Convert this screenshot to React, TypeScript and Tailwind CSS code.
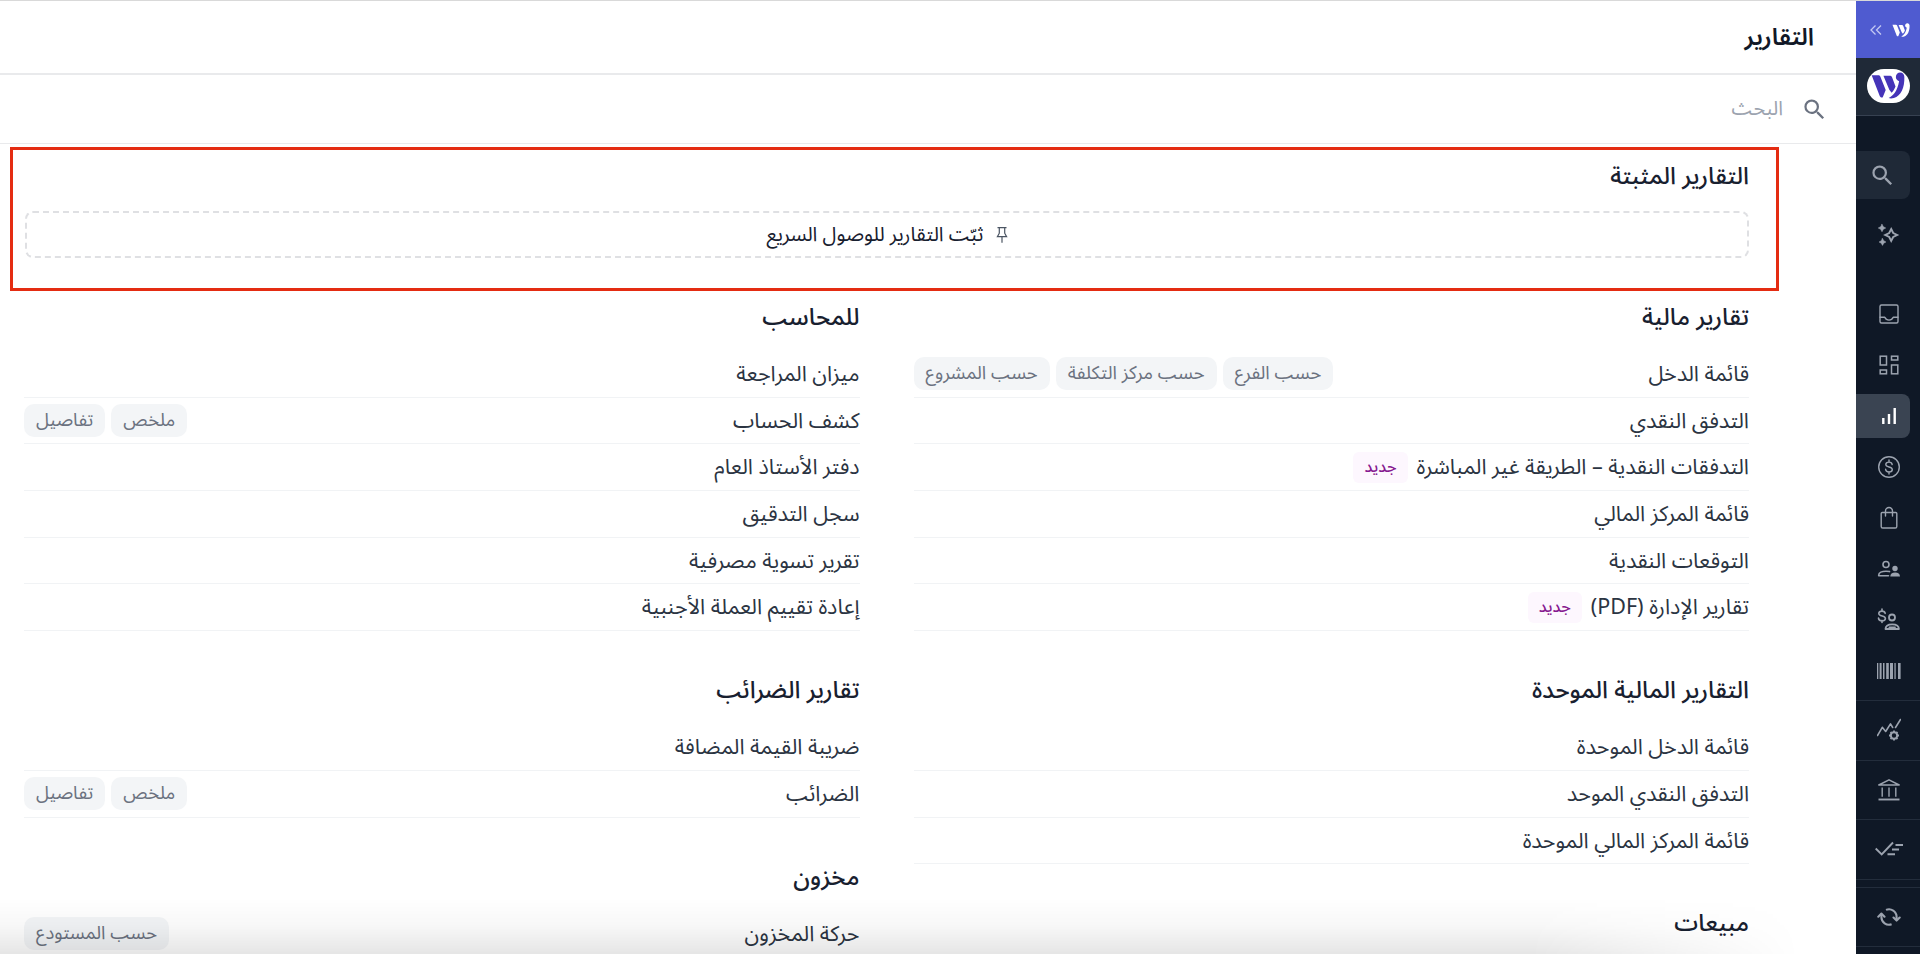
import { ReactNode } from 'react';
import { clsx } from 'clsx';
import { MdSearch } from 'react-icons/md';

interface Report {
  name: string;
  isNew?: boolean;
  tags?: string[];
}

interface Section {
  title: string;
  reports: Report[];
}

const rightColumn: Section[] = [
  {
    title: 'تقارير مالية',
    reports: [
      { name: 'قائمة الدخل', tags: ['حسب الفرع', 'حسب مركز التكلفة', 'حسب المشروع'] },
      { name: 'التدفق النقدي' },
      { name: 'التدفقات النقدية – الطريقة غير المباشرة', isNew: true },
      { name: 'قائمة المركز المالي' },
      { name: 'التوقعات النقدية' },
      { name: 'تقارير الإدارة (PDF)', isNew: true },
    ],
  },
  {
    title: 'التقارير المالية الموحدة',
    reports: [
      { name: 'قائمة الدخل الموحدة' },
      { name: 'التدفق النقدي الموحد' },
      { name: 'قائمة المركز المالي الموحدة' },
    ],
  },
  { title: 'مبيعات', reports: [] },
];

const leftColumn: Section[] = [
  {
    title: 'للمحاسب',
    reports: [
      { name: 'ميزان المراجعة' },
      { name: 'كشف الحساب', tags: ['ملخص', 'تفاصيل'] },
      { name: 'دفتر الأستاذ العام' },
      { name: 'سجل التدقيق' },
      { name: 'تقرير تسوية مصرفية' },
      { name: 'إعادة تقييم العملة الأجنبية' },
    ],
  },
  {
    title: 'تقارير الضرائب',
    reports: [
      { name: 'ضريبة القيمة المضافة' },
      { name: 'الضرائب', tags: ['ملخص', 'تفاصيل'] },
    ],
  },
  {
    title: 'مخزون',
    reports: [{ name: 'حركة المخزون', tags: ['حسب المستودع'] }],
  },
];

const Logo = ({ className }: { className?: string }) => (
  <svg viewBox="0 0 104 82" className={className} fill="currentColor">
    <path d="M2 10h20c4 0 6 2 7 5l16 40-9 22c-3 2-7 0-9-3z" />
    <path d="M38 11h19c4 0 7 2 8 6l10 27c-3 8-7 14-12 19l-7-9z" />
    <path d="M89 1c8 0 13 6 13 14 1 32-10 58-32 64-6 2-12 2-16 0 14-6 27-22 32-51-6-2-10-7-10-13 0-8 6-14 13-14z" />
  </svg>
);

// Iconos de línea de la barra lateral
const Icon = ({ children }: { children: ReactNode }) => (
  <svg
    viewBox="0 0 24 24"
    className="size-6"
    fill="none"
    stroke="currentColor"
    strokeWidth="1.4"
    strokeLinecap="round"
    strokeLinejoin="round"
  >
    {children}
  </svg>
);

const SparkleIcon = () => (
  <Icon>
    <path d="M14.200 6l2 4 4 2-4 2-2 4-2-4-4-2 4-2z" strokeWidth="1.900" strokeLinejoin="miter" />
    <path
      d="M5 1.300l1.300 2.400L8.700 5 6.300 6.300 5 8.700 3.700 6.300 1.300 5l2.400-1.300zM5.500 15.500l1.200 2.200L8.900 19l-2.200 1.200-1.200 2.200-1.200-2.200L2.100 19l2.200-1.300z"
      fill="currentColor"
      stroke="currentColor"
      strokeWidth=".6"
    />
  </Icon>
);

const InboxIcon = () => (
  <Icon>
    <rect x="3" y="3" width="18" height="18" rx="1.500" />
    <path d="M3 15.200h4.800c.8 1.900 2.400 2.900 4.200 2.900s3.400-1 4.200-2.900H21" />
  </Icon>
);

const DashboardIcon = () => (
  <Icon>
    <g strokeLinejoin="miter" strokeWidth="1.500">
      <rect x="3.200" y="3.200" width="6.300" height="8.800" />
      <rect x="14.500" y="3.200" width="6.300" height="3.800" />
      <rect x="14.500" y="12" width="6.300" height="8.800" />
      <rect x="3.200" y="17" width="6.300" height="3.800" />
    </g>
  </Icon>
);

const BarsIcon = () => (
  <Icon>
    <path d="M6.300 14v6M12 10v10M17.700 4v16" strokeWidth="2.400" strokeLinecap="butt" />
  </Icon>
);

const DollarIcon = () => (
  <Icon>
    <circle cx="12" cy="12" r="10.300" />
    <path d="M12 5v2M12 17v2M15.200 9.600C15 8 13.700 7.100 12 7.100c-1.900 0-3.200 1-3.200 2.400 0 3.400 6.500 1.500 6.500 5 0 1.500-1.400 2.500-3.300 2.500s-3.300-1-3.400-2.700" />
  </Icon>
);

const BagIcon = () => (
  <Icon>
    <path d="M5.200 6.500h13.600c.6 0 1 .4 1 1v12.900c0 .9-.7 1.600-1.600 1.600H5.800c-.9 0-1.600-.7-1.600-1.600V7.500c0-.6.400-1 1-1zM8.500 10V5a3.500 3.500 0 0 1 7 0v5" />
  </Icon>
);

const PeopleIcon = () => (
  <Icon>
    <circle cx="9" cy="7.500" r="3" strokeWidth="1.600" />
    <path d="M12.500 14.600c-1-.3-2.200-.4-3.500-.4-4 0-7.300 1.500-7.300 4v.6h9.800" strokeWidth="1.600" />
    <circle cx="18" cy="11.500" r="2.700" fill="currentColor" stroke="none" />
    <path d="M13.300 19.600c0-2.600 1.700-4 4.800-4s4.900 1.400 4.900 4z" fill="currentColor" stroke="none" />
  </Icon>
);

const PayrollIcon = () => (
  <Icon>
    <path
      d="M5 1v2M5 12.500v2M8.200 5.400C8 4 6.800 3.100 5 3.100c-1.900 0-3.200 1-3.200 2.300 0 3.400 6.600 1.900 6.600 5 0 1.400-1.400 2.300-3.400 2.300s-3.400-1-3.500-2.600"
      strokeWidth="1.600"
    />
    <circle cx="15" cy="9.500" r="3" strokeWidth="1.800" />
    <path d="M8.500 21c0-3.200 2.800-4.700 6.700-4.700s6.700 1.500 6.700 4.700z" strokeWidth="1.800" />
    <path d="M12.200 19.300h6" strokeWidth="1.500" />
  </Icon>
);

const BarcodeIcon = () => (
  <Icon>
    <g fill="currentColor" stroke="none">
      <rect x="0" y="4" width="1.300" height="16" />
      <rect x="2.600" y="4" width="2" height="16" />
      <rect x="6" y="4" width="1.500" height="16" />
      <rect x="9.200" y="4" width="2.600" height="16" />
      <rect x="13" y="4" width="3" height="16" />
      <rect x="17.400" y="4" width="1.300" height="16" />
      <rect x="21" y="4" width="2.600" height="16" />
    </g>
  </Icon>
);

const TrendIcon = () => (
  <Icon>
    <path d="M.5 17.500l4.800-8.200 3.400 4.200 4.800-7.600 2.200 3.600M18.500 9.500l5-8" strokeWidth="1.600" />
    <circle cx="17" cy="17.500" r="3.200" strokeWidth="2" />
    <path
      d="M17 12.500v1.500M17 21v1.500M12 17.500h1.500M20.500 17.500H22M13.500 14l1 1M19.500 20l1 1M20.500 14l-1 1M14.500 20l-1 1"
      strokeWidth="1.900"
      strokeLinecap="butt"
    />
  </Icon>
);

const BankIcon = () => (
  <Icon>
    <path d="M1.800 7L12 1.800 22.200 7z" strokeWidth="1.500" />
    <path d="M5.200 9.500v9.200M12 9.500v9.200M18.800 9.500v9.200" strokeLinecap="butt" />
    <path d="M1.500 21.500h21" strokeWidth="1.900" strokeLinecap="butt" />
  </Icon>
);

const ChecksIcon = () => (
  <svg viewBox="0 0 28 24" className="h-6 w-7" fill="none" stroke="currentColor" strokeWidth="1.900">
    <path d="M.7 11.500l6 6L18 5.500" />
    <path d="M20.500 8H28M17 12.500h7M12.500 17.200H20" />
  </svg>
);

const SyncIcon = () => (
  <Icon>
    <path d="M9 4.900A7.600 7.600 0 0 1 19.600 12v3M14.600 19.200A7.600 7.600 0 0 1 4.400 12V9" strokeWidth="2.100" strokeLinecap="butt" />
    <path d="M16.500 12.500l3.100 3.100 3.100-3.100M1.300 11.700l3.100-3.100 3.100 3.100" strokeWidth="2.100" />
  </Icon>
);

const PinIcon = () => (
  <svg viewBox="0 0 12 18" className="h-[18px] w-3" fill="none" stroke="#4b5563" strokeWidth="1.200">
    <path d="M1.500 1.700h9M3.300 1.700v5.500L1.400 10.600h9.200L8.700 7.200V1.700M6 10.600v6.200" />
  </svg>
);

interface NavItemProps {
  children: ReactNode;
  active?: boolean;
}

const NavItem = ({ children, active }: NavItemProps) => (
  <button
    className={clsx(
      'flex h-11 w-[54px] items-center justify-center rounded-r-lg pl-3',
      active ? 'bg-[#3a4452] text-white' : 'text-[#9ca3af]'
    )}
  >
    {children}
  </button>
);

const NavBlock = ({ children }: { children: ReactNode }) => (
  <div className="flex h-[59.5px] w-16 items-center justify-center border-t border-[#232d3c] pl-px text-[#9ca3af]">
    {children}
  </div>
);

const Sidebar = () => (
  <aside className="flex w-16 shrink-0 flex-col items-end overflow-hidden bg-[#0f1826]">
    <div className="flex h-[57px] w-16 items-center justify-center gap-2.5 bg-[#4f5bd0] pl-1 text-white">
      <Logo className="h-3.5 w-[18px]" />
      <svg viewBox="0 0 12 12" className="size-3 text-[#c3c8f2]" fill="none" stroke="currentColor" strokeWidth="1.300">
        <path d="M5.500 1.500L1 6l4.500 4.500M11 1.500L6.500 6l4.500 4.500" />
      </svg>
    </div>
    <div className="flex h-[58px] w-16 items-center justify-center border-b border-[#374151] bg-[#1f2937] pb-0.5">
      <div className="flex h-[34px] w-[43px] items-center justify-center rounded-[18px] bg-white text-[#4534b8]">
        <Logo className="h-[27px] w-[34px]" />
      </div>
    </div>

    <div className="mt-[35px] flex h-12 w-[54px] items-center justify-center rounded-r-lg bg-[#1f2937] pr-0.5 text-[#9ca3af]">
      <MdSearch className="size-[27px]" />
    </div>
    <div className="mt-3 mb-[33px] flex h-12 w-[54px] items-center justify-center pl-3 text-[#9ca3af]">
      <SparkleIcon />
    </div>

    <nav className="mb-[7px] flex flex-col gap-[7px]">
      <NavItem><InboxIcon /></NavItem>
      <NavItem><DashboardIcon /></NavItem>
      <NavItem active><BarsIcon /></NavItem>
      <NavItem><DollarIcon /></NavItem>
      <NavItem><BagIcon /></NavItem>
      <NavItem><PeopleIcon /></NavItem>
      <NavItem><PayrollIcon /></NavItem>
      <NavItem><BarcodeIcon /></NavItem>
    </nav>

    <NavBlock><TrendIcon /></NavBlock>
    <NavBlock><BankIcon /></NavBlock>
    <NavBlock><ChecksIcon /></NavBlock>
    <div className="h-2 w-16 shrink-0 border-t border-[#232d3c]" />
    <NavBlock><SyncIcon /></NavBlock>
    <div className="h-2 w-16 shrink-0 border-t border-[#232d3c]" />
  </aside>
);

const ReportRow = ({ report }: { report: Report }) => (
  <li className="flex h-[46.7px] items-center justify-between border-b border-[#f1f3f5]">
    <div className="flex items-center gap-[9px]">
      <span className="text-[21.5px] leading-8 text-[#2b3442]">{report.name}</span>
      {report.isNew && (
        <span className="rounded-md bg-[#fdf7fe] px-[11px] text-[16px] leading-[31px] font-medium text-[#86198f]">
          جديد
        </span>
      )}
    </div>
    {report.tags && (
      <div className="flex gap-1.5">
        {report.tags.map((tag) => (
          <span key={tag} className="rounded-[10px] bg-[#f3f5f7] px-3 text-[18.5px] leading-[33px] text-[#6b7280]">
            {tag}
          </span>
        ))}
      </div>
    )}
  </li>
);

const ReportColumn = ({ sections }: { sections: Section[] }) => (
  <div className="flex flex-1 flex-col gap-10">
    {sections.map((section) => (
      <section key={section.title}>
        <h2 className="mb-[13.3px] h-10 text-[24px] leading-10 font-medium text-[#18202f]">{section.title}</h2>
        <ul>
          {section.reports.map((report) => (
            <ReportRow key={report.name} report={report} />
          ))}
        </ul>
      </section>
    ))}
  </div>
);

export default function App() {
  return (
    <div
      dir="rtl"
      className="relative flex h-[954px] w-[1920px] overflow-hidden border-t border-[#d9d9d9] bg-white font-['Noto_Sans_Arabic','Noto_Sans','DejaVu_Sans',sans-serif]"
    >
      <Sidebar />

      <div className="flex min-w-0 flex-1 flex-col">
        <header className="flex h-[74px] shrink-0 items-center border-b-2 border-[#e9eaec] pt-0.5 pr-[42px]">
          <h1 className="text-[24px] font-semibold text-[#111827]">التقارير</h1>
        </header>
        <div className="flex h-[69px] shrink-0 items-center gap-[18px] border-b border-[#e9eaec] pr-7">
          <MdSearch className="size-[27px] text-[#6b7280]" />
          <span className="text-[20px] text-[#9ca3af]">البحث</span>
        </div>

        <main className="flex flex-col pr-[77px] pl-2.5">
          <section className="mt-[3px] h-36 w-[1769px] border-3 border-[#e42c12] pt-[7px] pr-[27px] pl-3">
            <h2 className="h-10 text-[24px] leading-10 font-medium text-[#18202f]">التقارير المثبتة</h2>
            <div className="mt-3.5 flex h-[47px] items-center justify-center gap-3 rounded-lg border-2 border-dashed border-[#dfe0e3]">
              <PinIcon />
              <span className="text-[20px] text-[#18202f]">ثبّت التقارير للوصول السريع</span>
            </div>
          </section>

          <div className="mt-[6.7px] flex gap-[54px] pr-[30px] pl-3.5">
            <ReportColumn sections={rightColumn} />
            <ReportColumn sections={leftColumn} />
          </div>
        </main>
      </div>

      <div className="pointer-events-none absolute bottom-0 left-0 h-14 w-[1800px] bg-linear-to-t from-black/10 via-black/3 to-transparent mask-r-from-85%" />
    </div>
  );
}
